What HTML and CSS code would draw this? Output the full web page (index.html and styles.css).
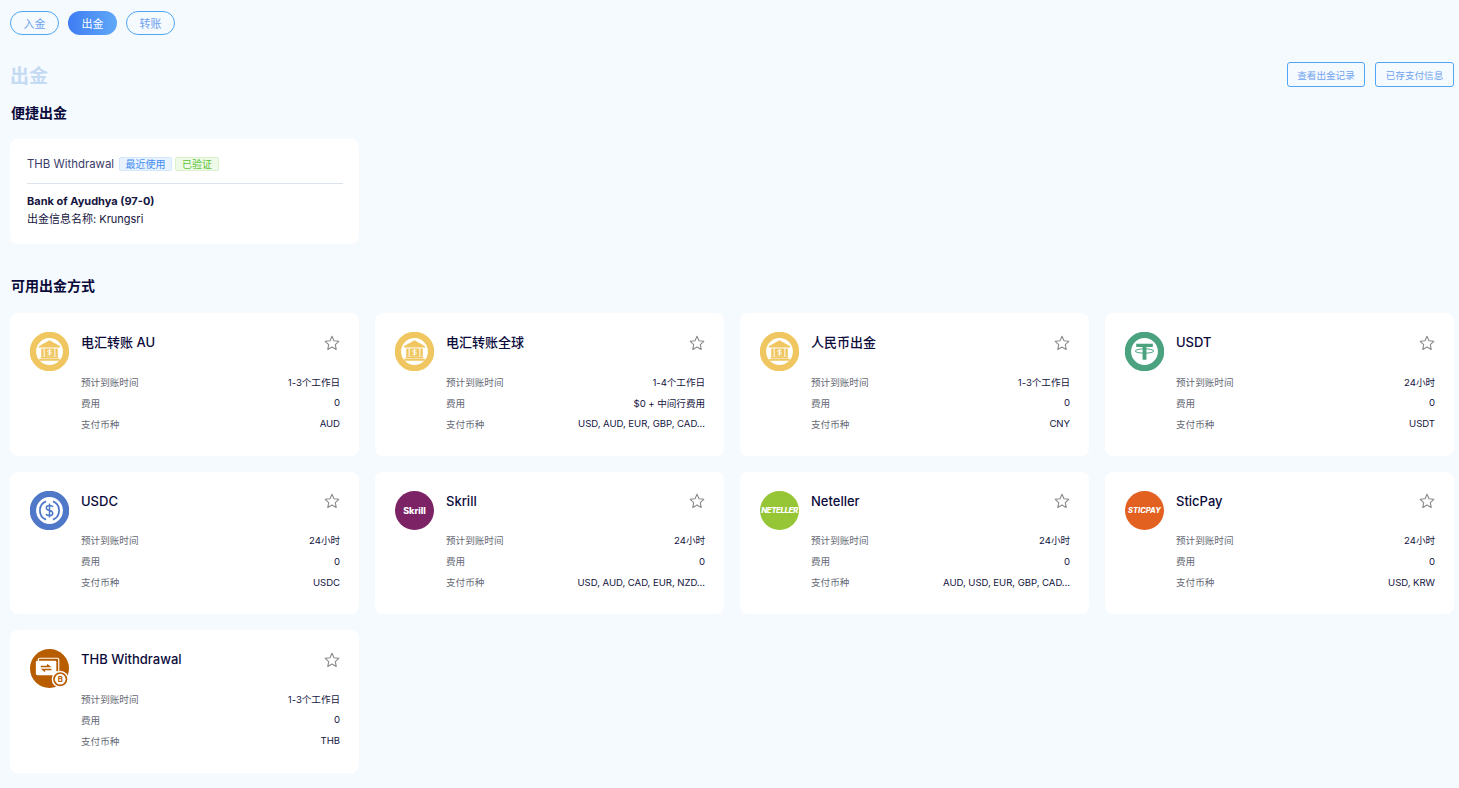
FILE: index.html
```html
<!DOCTYPE html>
<html lang="zh">
<head>
<meta charset="utf-8">
<title>出金</title>
<link rel="stylesheet" href="styles.css">
</head>
<body>
<svg class="defs" width="0" height="0" aria-hidden="true">
  <symbol id="bank" viewBox="0 0 40 40">
    <circle cx="20" cy="20" r="17" fill="#fff" stroke="#efc660" stroke-width="6.500"/>
    <path d="M20 8.500L31 14.500V16H9V14.500Z M9.500 27.500H30.500V29.500H9.500Z M11 25.500H29V27H11Z M11.500 17H14V25H11.500Z M26 17H28.500V25H26Z M15 17H25V25H15Z" fill="#efc660"/>
    <path d="M22 18.800H19C17.800 18.800 17.800 20.800 19 20.800H21C22.200 20.800 22.200 22.900 21 22.900H18M20 17.800V24" fill="none" stroke="#fff" stroke-width="0.900"/>
  </symbol>
  <symbol id="star" viewBox="0 0 16 16">
    <path d="M8 1.300L10 5.700L14.800 6.300L11.300 9.600L12.200 14.400L8 12L3.800 14.400L4.700 9.600L1.200 6.300L6 5.700Z" fill="none" stroke="#8a8a8a" stroke-width="1.100" stroke-linejoin="round"/>
  </symbol>
</svg>
<main class="page">
  <nav class="tabs">
    <a class="tab">入金</a>
    <a class="tab tab-active">出金</a>
    <a class="tab">转账</a>
  </nav>
  <header class="head">
    <h1 class="title">出金</h1>
    <div class="actions">
      <a class="btn btn-a">查看出金记录</a>
      <a class="btn">已存支付信息</a>
    </div>
  </header>
  <h2 class="sub sub-first">便捷出金</h2>
  <section class="quick">
    <div class="quick-top">
      <span class="quick-name">THB Withdrawal</span>
      <span class="tag tag-blue">最近使用</span>
      <span class="tag tag-green">已验证</span>
    </div>
    <p class="quick-bank">Bank of Ayudhya (97-0)</p>
    <p class="quick-info">出金信息名称: Krungsri</p>
  </section>
  <h2 class="sub sub-second">可用出金方式</h2>
  <section class="grid">

    <article class="card">
      <svg class="logo"><use href="#bank"/></svg>
      <div class="body">
        <div class="card-head"><h3 class="name">电汇转账 AU</h3><svg class="star"><use href="#star"/></svg></div>
        <dl class="rows">
          <div class="row"><dt>预计到账时间</dt><dd>1-3个工作日</dd></div>
          <div class="row"><dt>费用</dt><dd>0</dd></div>
          <div class="row"><dt>支付币种</dt><dd>AUD</dd></div>
        </dl>
      </div>
    </article>

    <article class="card">
      <svg class="logo"><use href="#bank"/></svg>
      <div class="body">
        <div class="card-head"><h3 class="name">电汇转账全球</h3><svg class="star"><use href="#star"/></svg></div>
        <dl class="rows">
          <div class="row"><dt>预计到账时间</dt><dd>1-4个工作日</dd></div>
          <div class="row"><dt>费用</dt><dd>$0 + 中间行费用</dd></div>
          <div class="row"><dt>支付币种</dt><dd>USD, AUD, EUR, GBP, CAD...</dd></div>
        </dl>
      </div>
    </article>

    <article class="card">
      <svg class="logo"><use href="#bank"/></svg>
      <div class="body">
        <div class="card-head"><h3 class="name">人民币出金</h3><svg class="star"><use href="#star"/></svg></div>
        <dl class="rows">
          <div class="row"><dt>预计到账时间</dt><dd>1-3个工作日</dd></div>
          <div class="row"><dt>费用</dt><dd>0</dd></div>
          <div class="row"><dt>支付币种</dt><dd>CNY</dd></div>
        </dl>
      </div>
    </article>

    <article class="card">
      <svg class="logo" viewBox="0 0 40 40">
        <circle cx="20" cy="20" r="17" fill="#fff" stroke="#4aa27f" stroke-width="6.500"/>
        <path d="M11.500 12H28.500V15.500H22V28.500H18V15.500H11.500Z" fill="#4aa27f"/>
        <ellipse cx="20" cy="19.500" rx="9.500" ry="2.200" fill="none" stroke="#4aa27f" stroke-width="1"/>
      </svg>
      <div class="body">
        <div class="card-head"><h3 class="name">USDT</h3><svg class="star"><use href="#star"/></svg></div>
        <dl class="rows">
          <div class="row"><dt>预计到账时间</dt><dd>24小时</dd></div>
          <div class="row"><dt>费用</dt><dd>0</dd></div>
          <div class="row"><dt>支付币种</dt><dd>USDT</dd></div>
        </dl>
      </div>
    </article>

    <article class="card">
      <svg class="logo" viewBox="0 0 40 40">
        <circle cx="20" cy="20" r="17" fill="#fff" stroke="#4f78c8" stroke-width="6.500"/>
        <path d="M16.500 10.700A10 10 0 0 0 16.500 29.300M23.500 10.700A10 10 0 0 1 23.500 29.300" fill="none" stroke="#4f78c8" stroke-width="1.800"/>
        <path d="M23.500 16.500C23 15 21.500 14.800 20 14.800C18 14.800 16.700 15.800 16.700 17.300C16.700 19 18.200 19.600 20 20C21.800 20.400 23.300 21 23.300 22.700C23.300 24.200 22 25.200 20 25.200C18.500 25.200 17 25 16.500 23.500M20 12.800V27.200" fill="none" stroke="#4f78c8" stroke-width="1.500"/>
      </svg>
      <div class="body">
        <div class="card-head"><h3 class="name">USDC</h3><svg class="star"><use href="#star"/></svg></div>
        <dl class="rows">
          <div class="row"><dt>预计到账时间</dt><dd>24小时</dd></div>
          <div class="row"><dt>费用</dt><dd>0</dd></div>
          <div class="row"><dt>支付币种</dt><dd>USDC</dd></div>
        </dl>
      </div>
    </article>

    <article class="card">
      <div class="logo brand brand-skrill">Skrill</div>
      <div class="body">
        <div class="card-head"><h3 class="name">Skrill</h3><svg class="star"><use href="#star"/></svg></div>
        <dl class="rows">
          <div class="row"><dt>预计到账时间</dt><dd>24小时</dd></div>
          <div class="row"><dt>费用</dt><dd>0</dd></div>
          <div class="row"><dt>支付币种</dt><dd>USD, AUD, CAD, EUR, NZD...</dd></div>
        </dl>
      </div>
    </article>

    <article class="card">
      <div class="logo brand brand-neteller">NETELLER</div>
      <div class="body">
        <div class="card-head"><h3 class="name">Neteller</h3><svg class="star"><use href="#star"/></svg></div>
        <dl class="rows">
          <div class="row"><dt>预计到账时间</dt><dd>24小时</dd></div>
          <div class="row"><dt>费用</dt><dd>0</dd></div>
          <div class="row"><dt>支付币种</dt><dd>AUD, USD, EUR, GBP, CAD...</dd></div>
        </dl>
      </div>
    </article>

    <article class="card">
      <div class="logo brand brand-sticpay">STICPAY</div>
      <div class="body">
        <div class="card-head"><h3 class="name">SticPay</h3><svg class="star"><use href="#star"/></svg></div>
        <dl class="rows">
          <div class="row"><dt>预计到账时间</dt><dd>24小时</dd></div>
          <div class="row"><dt>费用</dt><dd>0</dd></div>
          <div class="row"><dt>支付币种</dt><dd>USD, KRW</dd></div>
        </dl>
      </div>
    </article>

    <article class="card">
      <svg class="logo" viewBox="0 0 40 40">
        <circle cx="20" cy="20" r="20" fill="#b85c00"/>
        <rect x="8.500" y="9.500" width="21" height="14" rx="1.500" fill="none" stroke="#fff" stroke-width="1.200"/>
        <rect x="6" y="12" width="21" height="15" rx="1.500" fill="#fff"/>
        <path d="M11 18H20L17.500 16M22 21H13L15.500 23" fill="none" stroke="#b85c00" stroke-width="1.400"/>
        <circle cx="31" cy="31" r="8" fill="#b85c00" stroke="#fff" stroke-width="1.500"/>
        <circle cx="31" cy="31" r="5.500" fill="#fff"/>
        <text x="31" y="34" class="thb-glyph">B</text>
      </svg>
      <div class="body">
        <div class="card-head"><h3 class="name">THB Withdrawal</h3><svg class="star"><use href="#star"/></svg></div>
        <dl class="rows">
          <div class="row"><dt>预计到账时间</dt><dd>1-3个工作日</dd></div>
          <div class="row"><dt>费用</dt><dd>0</dd></div>
          <div class="row"><dt>支付币种</dt><dd>THB</dd></div>
        </dl>
      </div>
    </article>

  </section>
</main>
</body>
</html>
```
FILE: styles.css
```css
* { box-sizing: border-box; }
html, body { margin: 0; height: 100%; }
body {
  background: #f5faff;
  color: #0b0b3b;
  font-family: "Inter", "Noto Sans CJK SC", sans-serif;
  overflow: hidden;
}
.defs { display: block; height: 0; }
.page { padding: 11px 5px 0 10px; }

.tabs { display: flex; gap: 9px; }
.tab {
  width: 49px; height: 24px;
  display: flex; align-items: center; justify-content: center;
  border: 1px solid #4fa6f5;
  border-radius: 12px;
  font-size: 11px;
  color: #6fa3ee;
}
.tab-active {
  border: 0;
  color: #fff;
  background: linear-gradient(90deg, #3f7cf3, #5fa9f7);
}

.head { display: flex; justify-content: space-between; align-items: center; margin-top: 27px; height: 25px; }
.title { margin: 3px 0 0; font-size: 19px; font-weight: 700; color: #c5dbf3; line-height: 25px; }
.actions { display: flex; gap: 10px; }
.btn {
  height: 25px; width: 78px;
  display: flex; align-items: center; justify-content: center;
  border: 1px solid #4fa6f5;
  border-radius: 3px;
  font-size: 9.600px;
  color: #6fa3ee;
}
.btn + .btn { width: 79px; }

.sub { margin: 0; padding-left: 1px; font-size: 14px; font-weight: 700; line-height: 20px; color: #0b0b3b; }
.sub-first { margin-top: 16px; }
.sub-second { margin-top: 32px; }

.quick {
  width: 349px; height: 105px;
  margin-top: 16px;
  padding: 16px 16px 0 17px;
  background: #fff;
  border-radius: 8px;
}
.quick-top {
  display: flex; align-items: center; gap: 5px;
  box-sizing: content-box;
  height: 14px;
  padding: 2px 0 12px;
  border-bottom: 1px solid #dde3ea;
}
.quick-name { font-size: 11.400px; color: #3b3b6b; }
.tag {
  height: 14px;
  display: flex; align-items: center; justify-content: center;
  font-size: 10px; line-height: 1;
  border: 1px solid;
  border-radius: 2px;
}
.tag-blue { width: 53px; color: #3f8bf0; background: #e8f3ff; border-color: #d4e8fd; }
.tag-green { width: 44px; margin-left: -2px; color: #5cc43a; background: #effbe8; border-color: #d9f2cb; }
.quick-bank { margin: 8px 0 0; font-size: 11px; font-weight: 700; line-height: 18px; color: #15153f; }
.quick-info { margin: 0; font-size: 11px; line-height: 18px; color: #15153f; }

.grid {
  display: grid;
  grid-template-columns: repeat(4, 1fr);
  gap: 16px;
  margin-top: 17px;
}
.card {
  height: 142.500px;
  display: flex;
  padding: 19px 19px 0 20px;
  background: #fff;
  border-radius: 8px;
}
.logo { width: 39px; height: 39px; flex: none; display: block; }
.brand {
  border-radius: 50%;
  display: flex; align-items: center; justify-content: center;
  color: #fff; font-weight: 800;
  white-space: nowrap;
  overflow: hidden;
}
.brand-skrill { background: #7b2365; font-size: 9px; }
.brand-neteller { background: #96c535; font-size: 8px; font-style: italic; letter-spacing: -0.500px; }
.brand-sticpay { background: #e36120; font-size: 7.500px; font-style: italic; }
.thb-glyph { font-size: 8px; font-weight: 700; fill: #b85c00; text-anchor: middle; }

.body { flex: 1; min-width: 0; margin-left: 12px; }
.card-head { display: flex; justify-content: space-between; align-items: center; height: 20px; }
.name { margin: 0; font-size: 13px; font-weight: 500; color: #0b0b3b; line-height: 20px; }
.star { width: 16px; height: 16px; flex: none; margin-top: 1px; }
.rows { margin: 19px 0 0; }
.row {
  display: flex; justify-content: space-between; align-items: center;
  height: 21px;
  font-size: 9.600px;
}
.row dt { color: #666a75; }
.row dd { margin: 0; color: #15153f; white-space: nowrap; letter-spacing: -0.050px; }
```
